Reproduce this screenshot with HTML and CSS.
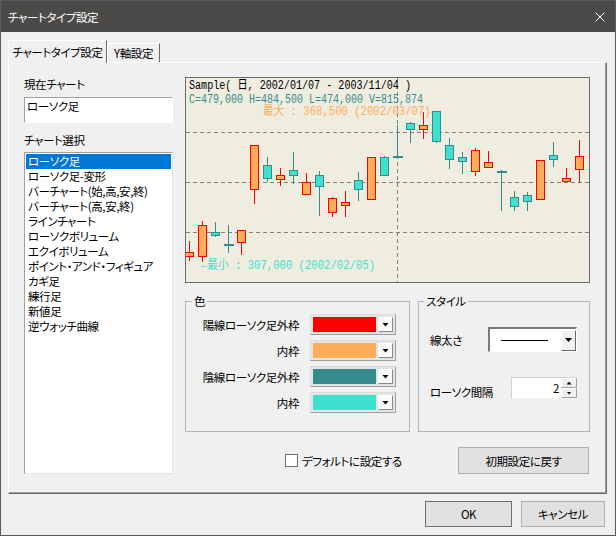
FILE: index.html
```html
<!DOCTYPE html>
<html lang="ja">
<head>
<meta charset="utf-8">
<title>チャートタイプ設定</title>
<link rel="stylesheet" href="styles.css">
</head>
<body>
<div class="window">
  <div class="titlebar">
    <span class="title">チャートタイプ設定</span>
    <svg class="close" width="10" height="10" viewBox="0 0 10 10"><path d="M0.5 0.5 L9.5 9.5 M9.5 0.5 L0.5 9.5"/></svg>
  </div>
  <div class="client">
    <div class="tabs">
      <div class="tab active">チャートタイプ設定</div>
      <div class="tab">Y軸設定</div>
    </div>
    <div class="panel">
      <div class="left">
        <div class="label">現在チャート</div>
        <div class="textbox">ローソク足</div>
        <div class="label label2">チャート選択</div>
        <ul class="listbox">
          <li class="sel">ローソク足</li>
          <li>ローソク足-変形</li>
          <li>バーチャート(始,高,安,終)</li>
          <li>バーチャート(高,安,終)</li>
          <li>ラインチャート</li>
          <li>ローソクボリューム</li>
          <li>エクイボリューム</li>
          <li>ポイント・アンド・フィギュア</li>
          <li>カギ足</li>
          <li>練行足</li>
          <li>新値足</li>
          <li>逆ウォッチ曲線</li>
        </ul>
      </div>
      <div class="right">
        <div class="chart">
          <svg class="chart-svg" width="405" height="206" viewBox="185 77 405 206">
            <rect class="chart-bg" x="185" y="77" width="405" height="206"/>
            <g class="grid">
              <line x1="186" y1="132" x2="589" y2="132"/>
              <line x1="186" y1="182" x2="589" y2="182"/>
              <line x1="186" y1="232" x2="589" y2="232"/>
              <line x1="397.5" y1="78" x2="397.5" y2="282"/>
            </g>
            <text class="ct ct-title" x="189" y="89" textLength="222" lengthAdjust="spacingAndGlyphs">Sample( 日, 2002/01/07 - 2003/11/04 )</text>
            <text class="ct ct-info" x="189" y="103" textLength="234" lengthAdjust="spacingAndGlyphs">C=479,000 H=484,500 L=474,000 V=815,874</text>
            <text class="ct ct-max" x="263" y="115" textLength="174" lengthAdjust="spacingAndGlyphs">最大 : 368,500 (2002/03/07)→</text>
            <text class="ct ct-min" x="201" y="269" textLength="174" lengthAdjust="spacingAndGlyphs">←最小 : 307,000 (2002/02/05)</text>

            <g class="cu"><line x1="189.5" y1="241" x2="189.5" y2="261"/><rect x="185.5" y="252.5" width="8" height="4"/></g>
            <g class="cu"><line x1="202.5" y1="221" x2="202.5" y2="262"/><rect x="198.5" y="225.5" width="8" height="31"/></g>
            <g class="cd"><line x1="215.5" y1="222" x2="215.5" y2="237"/><rect x="211.5" y="232.5" width="8" height="3"/></g>
            <g class="cx"><line class="v" x1="228.5" y1="225" x2="228.5" y2="253"/><line class="h" x1="224" y1="245" x2="234" y2="245"/></g>
            <g class="cu"><line x1="241.5" y1="230" x2="241.5" y2="255"/><rect x="237.5" y="230.5" width="8" height="12"/></g>
            <g class="cu"><line x1="254.5" y1="145" x2="254.5" y2="204"/><rect x="250.5" y="145.5" width="8" height="44"/></g>
            <g class="cd"><line x1="267.5" y1="157" x2="267.5" y2="182"/><rect x="263.5" y="165.5" width="8" height="13"/></g>
            <g class="cu"><line x1="280.5" y1="168" x2="280.5" y2="186"/><rect x="276.5" y="175.5" width="8" height="4"/></g>
            <g class="cd"><line x1="293.5" y1="152" x2="293.5" y2="184"/><rect x="289.5" y="170.5" width="8" height="5"/></g>
            <g class="cu"><line x1="306.5" y1="173" x2="306.5" y2="195"/><rect x="302.5" y="182.5" width="8" height="12"/></g>
            <g class="cd"><line x1="319.5" y1="171" x2="319.5" y2="216"/><rect x="315.5" y="175.5" width="8" height="11"/></g>
            <g class="cu"><line x1="332.5" y1="197" x2="332.5" y2="217"/><rect x="328.5" y="198.5" width="8" height="14"/></g>
            <g class="cu"><line x1="345.5" y1="191" x2="345.5" y2="217"/><rect x="341.5" y="202.5" width="8" height="3"/></g>
            <g class="cd"><line x1="358.5" y1="172" x2="358.5" y2="201"/><rect x="354.5" y="180.5" width="8" height="9"/></g>
            <g class="cu"><rect x="367.5" y="157.5" width="8" height="42"/></g>
            <g class="cd"><line x1="384.5" y1="156" x2="384.5" y2="176"/><rect x="380.5" y="157.5" width="8" height="18"/></g>
            <g class="cx"><line class="v" x1="397.5" y1="125" x2="397.5" y2="157"/><line class="h" x1="393" y1="157" x2="403" y2="157"/></g>
            <g class="cd"><line x1="410.5" y1="122" x2="410.5" y2="143"/><rect x="406.5" y="123.5" width="8" height="6"/></g>
            <g class="cu"><line x1="423.5" y1="112" x2="423.5" y2="139"/><rect x="419.5" y="125.5" width="8" height="4"/></g>
            <g class="cd"><line x1="436.5" y1="111" x2="436.5" y2="143"/><rect x="432.5" y="111.5" width="8" height="30"/></g>
            <g class="cd"><line x1="449.5" y1="138" x2="449.5" y2="169"/><rect x="445.5" y="145.5" width="8" height="14"/></g>
            <g class="cd"><line x1="462.5" y1="152" x2="462.5" y2="174"/><rect x="458.5" y="157.5" width="8" height="4"/></g>
            <g class="cu"><line x1="475.5" y1="148" x2="475.5" y2="176"/><rect x="471.5" y="150.5" width="8" height="21"/></g>
            <g class="cu"><line x1="488.5" y1="151" x2="488.5" y2="168"/><rect x="484.5" y="162.5" width="8" height="5"/></g>
            <g class="cx"><line class="v" x1="501.5" y1="170" x2="501.5" y2="211"/><line class="h" x1="497" y1="172" x2="507" y2="172"/></g>
            <g class="cd"><line x1="514.5" y1="191" x2="514.5" y2="211"/><rect x="510.5" y="197.5" width="8" height="9"/></g>
            <g class="cd"><line x1="527.5" y1="192" x2="527.5" y2="211"/><rect x="523.5" y="195.5" width="8" height="6"/></g>
            <g class="cu"><rect x="536.5" y="160.5" width="8" height="39"/></g>
            <g class="cd"><line x1="553.5" y1="142" x2="553.5" y2="167"/><rect x="549.5" y="155.5" width="8" height="4"/></g>
            <g class="cu"><line x1="566.5" y1="168" x2="566.5" y2="182"/><rect x="562.5" y="178.5" width="8" height="3"/></g>
            <g class="cu"><line x1="579.5" y1="140" x2="579.5" y2="183"/><rect x="575.5" y="156.5" width="8" height="13"/></g>

            <rect class="chart-border" x="185.5" y="77.5" width="404" height="205"/>
          </svg>
        </div>
        <div class="groups">
          <fieldset class="group colors">
            <legend>色</legend>
            <div class="color-grid">
              <span class="cl">陽線ローソク足外枠</span>
              <div class="combo"><span class="swatch sw-red"></span><span class="ddbtn"><span class="arrow"></span></span></div>
              <span class="cl">内枠</span>
              <div class="combo"><span class="swatch sw-orange"></span><span class="ddbtn"><span class="arrow"></span></span></div>
              <span class="cl">陰線ローソク足外枠</span>
              <div class="combo"><span class="swatch sw-teal"></span><span class="ddbtn"><span class="arrow"></span></span></div>
              <span class="cl">内枠</span>
              <div class="combo"><span class="swatch sw-turq"></span><span class="ddbtn"><span class="arrow"></span></span></div>
            </div>
          </fieldset>
          <fieldset class="group style">
            <legend>スタイル</legend>
            <div class="srow srow1">
              <span class="sl">線太さ</span>
              <div class="linecombo"><span class="lc-line"></span><span class="lc-btn"><span class="arrow"></span></span></div>
            </div>
            <div class="srow srow2">
              <span class="sl">ローソク間隔</span>
              <div class="spin"><span class="spin-val">2</span><span class="spin-btns"><span class="sb"><span class="tri-up"></span></span><span class="sb"><span class="tri-down"></span></span></span></div>
            </div>
          </fieldset>
        </div>
        <div class="bottom-row">
          <label class="check"><span class="box"></span><span>デフォルトに設定する</span></label>
          <button class="btn reset">初期設定に戻す</button>
        </div>
      </div>
    </div>
    <div class="buttons">
      <button class="btn ok">OK</button>
      <button class="btn cancel">キャンセル</button>
    </div>
  </div>
</div>
</body>
</html>
```
FILE: styles.css
```css
* { box-sizing: border-box; }
html, body { margin: 0; padding: 0; }
body {
  font-family: "Noto Sans CJK JP", "Noto Sans", sans-serif;
  font-size: 11.5px;
  letter-spacing: -0.4px;
  font-feature-settings: "palt";
  color: #000;
  background: #f0f0f0;
}
.window {
  width: 616px;
  height: 536px;
  border: 1px solid #5a5a5a;
  background: #f0f0f0;
  display: flex;
  flex-direction: column;
}
.titlebar {
  flex: none;
  height: 31px;
  background: #4c4a48;
  color: #fff;
  display: flex;
  align-items: center;
  padding-left: 7px;
}
.title { flex: 1; line-height: 14px; }
.close { margin-right: 10px; display: block; }
.close path { stroke: #fff; stroke-width: 1; fill: none; }

.client {
  flex: 1;
  display: flex;
  flex-direction: column;
  padding: 8px 0 0 7px;
}
.tabs {
  display: flex;
  align-items: flex-end;
  height: 23px;
  margin-bottom: -1px;
  position: relative;
  z-index: 1;
}
.tab {
  height: 19px;
  margin-bottom: 1px;
  width: 53px;
  border: 1px solid;
  border-bottom: none;
  border-color: #fff #696969 transparent #fff;
  background: #f0f0f0;
  display: flex;
  align-items: center;
  justify-content: center;
  line-height: 14px;
  white-space: nowrap;
}
.tab.active {
  width: 99px;
  height: 23px;
  margin-bottom: 0;
}
.panel {
  width: 599px;
  height: 432px;
  border: 1px solid;
  border-color: #fff #696969 #696969 #fff;
  box-shadow: inset -1px -1px 0 #a0a0a0;
  display: flex;
  gap: 12px;
  padding: 14px 16px 0 15px;
}
.left {
  width: 149px;
  display: flex;
  flex-direction: column;
}
.label { line-height: 14px; height: 14px; white-space: nowrap; }
.label2 { margin-top: 10px; }
.textbox {
  margin-top: 6px;
  height: 26px;
  border: 1px solid;
  border-color: #a0a0a0 #fff #fff #a0a0a0;
  background: #fff;
  padding: 1px 2px 0;
  line-height: 15px;
}
.listbox {
  margin: 5px 0 0;
  height: 322px;
  list-style: none;
  padding: 1px;
  border: 1px solid;
  border-color: #a0a0a0 #e3e3e3 #e3e3e3 #a0a0a0;
  background: #fff;
}
.listbox li {
  height: 15px;
  line-height: 15px;
  padding-left: 2px;
  white-space: nowrap;
}
.listbox li.sel { background: #0078d7; color: #fff; }

.right {
  width: 405px;
  display: flex;
  flex-direction: column;
}
.chart { height: 206px; }
.chart-svg { display: block; }
.chart-bg { fill: #efece0; }
.chart-border { fill: none; stroke: #6a6a6a; stroke-width: 1; }
.grid line { stroke: #808080; stroke-width: 1; stroke-dasharray: 4 3; shape-rendering: crispEdges; }
.ct { font-family: "Liberation Mono", "Noto Sans CJK JP", monospace; font-size: 12.5px; letter-spacing: 0; font-feature-settings: normal; }
.ct-title { fill: #000; }
.ct-info { fill: #368c8c; }
.ct-max { fill: #ffad5b; }
.ct-min { fill: #40e0d0; }
.cu line, .cu rect { stroke: #ff0000; stroke-width: 1; }
.cu rect { fill: #ffad5b; }
.cd line, .cd rect { stroke: #368c8c; stroke-width: 1; }
.cd rect { fill: #40e0d0; }
.cx line { stroke: #368c8c; }
.cx .v { stroke-width: 1; }
.cx .h { stroke-width: 2; }

.groups {
  display: flex;
  gap: 8px;
  margin-top: 11px;
  height: 138px;
}
.group {
  margin: 0;
  padding: 0;
  border: 1px solid #b4b4b4;
  min-width: 0;
  height: 138px;
}
.group legend {
  padding: 0 2px;
  margin-left: 6px;
  line-height: 14px;
}
.colors { width: 225px; }
.style { width: 172px; margin-left: 0; padding: 0 11px; }
.style legend { margin-left: -6px; }

.color-grid {
  display: grid;
  grid-template-columns: 113px 86px;
  grid-auto-rows: 21px;
  column-gap: 11px;
  row-gap: 5px;
  padding-top: 6px;
  align-items: center;
}
.cl { text-align: right; line-height: 14px; white-space: nowrap; }
.combo {
  height: 21px;
  display: flex;
  align-items: center;
  gap: 2px;
  padding: 2px;
  border: 1px solid;
  border-color: #dcdcdc #a0a0a0 #a0a0a0 #dcdcdc;
  background: #e5e5e5;
}
.swatch { flex: 1; height: 15px; }
.sw-red { background: #ff0000; }
.sw-orange { background: #ffad5b; }
.sw-teal { background: #368c8c; }
.sw-turq { background: #40e0d0; }
.ddbtn {
  width: 15px;
  height: 15px;
  background: #fbfbfb;
  border: 1px solid;
  border-color: #fff #8a8a8a #8a8a8a #fff;
  display: flex;
  align-items: center;
  justify-content: center;
}
.arrow {
  width: 7px;
  height: 4px;
  background: #000;
  clip-path: polygon(0 0, 100% 0, 50% 100%);
}

.srow { display: flex; justify-content: space-between; }
.srow1 { align-items: center; margin-top: 19px; }
.srow2 { align-items: flex-end; margin-top: 25px; }
.sl { line-height: 14px; white-space: nowrap; }
.linecombo {
  width: 89px;
  height: 25px;
  margin-right: 1px;
  border-style: solid;
  border-width: 2px 1px 1px 2px;
  border-color: #7a7a7a #fff #fff #7a7a7a;
  background: #fff;
  display: flex;
  align-items: center;
}
.lc-line { width: 47px; height: 1px; background: #000; margin-left: 11px; }
.lc-btn {
  margin-left: auto;
  width: 15px;
  height: 21px;
  background: #f0f0f0;
  border: 1px solid;
  border-color: #fff #696969 #696969 #fff;
  display: flex;
  align-items: center;
  justify-content: center;
}
.spin {
  width: 67px;
  height: 22px;
  border: 1px solid;
  border-color: #d0d0d0 #f4f4f4 #f4f4f4 #d0d0d0;
  background: #fff;
  display: flex;
}
.spin-val { flex: 1; text-align: right; padding-right: 2px; line-height: 20px; }
.spin-btns { width: 16px; display: flex; flex-direction: column; }
.sb {
  height: 10px;
  background: #f0f0f0;
  border: 1px solid;
  border-color: #fff #a0a0a0 #a0a0a0 #fff;
  display: flex;
  align-items: center;
  justify-content: center;
}
.tri-up, .tri-down { width: 5px; height: 3px; background: #000; }
.tri-up { clip-path: polygon(50% 0, 100% 100%, 0 100%); }
.tri-down { clip-path: polygon(0 0, 100% 0, 50% 100%); }

.bottom-row {
  display: flex;
  align-items: center;
  margin-top: 15px;
  height: 27px;
}
.check {
  margin-left: 100px;
  display: flex;
  align-items: center;
  gap: 4px;
  line-height: 14px;
}
.box {
  width: 13px;
  height: 13px;
  border: 1px solid #707070;
  background: #fff;
}
.btn {
  font: inherit;
  letter-spacing: -0.4px;
  font-feature-settings: "palt";
  background: #e1e1e1;
  border: 1px solid #adadad;
  padding: 0;
  color: #000;
  line-height: 14px;
}
.reset { margin-left: auto; margin-right: 1px; width: 131px; height: 27px; }
.buttons {
  display: flex;
  justify-content: flex-end;
  gap: 9px;
  padding-right: 10px;
  margin-top: 7px;
}
.ok { width: 87px; height: 26px; border: 1px solid #6f6f6f; }
.cancel { width: 84px; height: 26px; }
```
